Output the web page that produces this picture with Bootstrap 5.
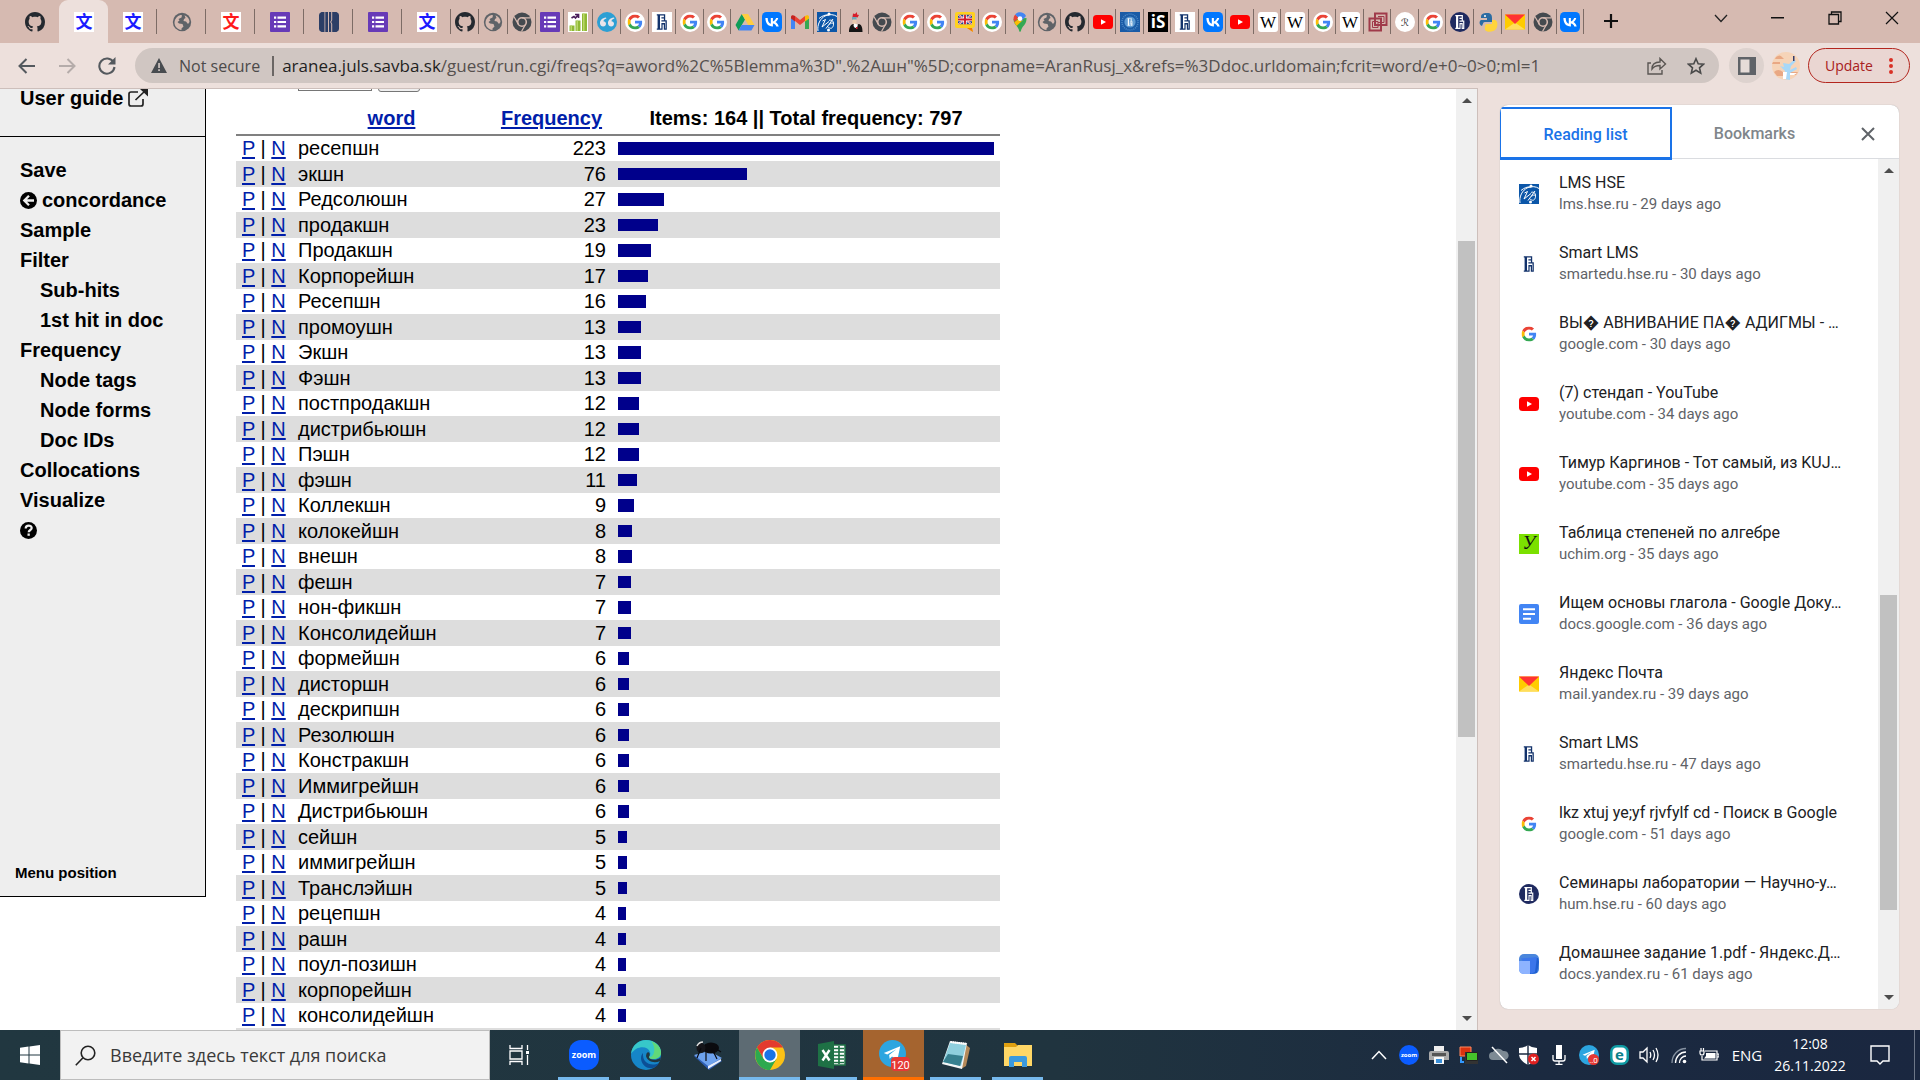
<!DOCTYPE html>
<html lang="en">
<head>
<meta charset="utf-8">
<meta name="viewport" content="width=device-width, initial-scale=1">
<title>Frequency list</title>
<link rel="stylesheet" href="https://cdn.jsdelivr.net/npm/bootstrap@5.3.0/dist/css/bootstrap.min.css">
<style>
:root { --frame:#d6bab1; --bar:#ede0dc; --pill:#d0c6c2; --ui:"Open Sans","Noto Sans",sans-serif; }
body { font-family:"Liberation Sans",Arial,sans-serif; color:#000; background:var(--bar); }
svg { display:block; flex:none; }
button { background:none; border:0; padding:0; color:inherit; }
.ico { width:20px; height:20px; }

/* tab strip */
.tabstrip { height:43px; background:var(--frame); }
.tab { display:flex; align-items:center; justify-content:center; flex:1 1 0; min-width:0; height:43px; position:relative; }
.tab.sep::after { content:""; position:absolute; right:0; top:9px; height:25px; width:1px; background:#7d6c66; }
.tab-first { width:10px; }
.tabs-wide { width:441px; }
.tabs-mid { width:170px; }
.tabs-slim { width:963px; }
.tab.current { background:var(--bar); border-radius:9px 9px 0 0; }
.win-btn { width:57px; height:36px; display:flex; align-items:center; justify-content:center; }
.new-tab { width:54px; height:34px; display:flex; align-items:center; justify-content:center; }

/* toolbar */
.toolbar { height:45px; padding:0 10px 0 7px; font-family:var(--ui); }
.nav-btn { width:40px; height:40px; display:flex; align-items:center; justify-content:center; }
.pill { background:var(--pill); border-radius:18px; height:35px; color:#4c4a4a; font-size:16px; padding:0 14px 0 16px; margin:0 10px 0 8px; }
.pill-share { margin-right:20px; }
.url-text { white-space:nowrap; overflow:hidden; color:#55504e; font-size:17px; }
.url-text b { font-weight:400; color:#1f1f1f; }
.round-btn { width:35px; height:35px; border-radius:50%; background:#ddd2ce; display:flex; align-items:center; justify-content:center; }
.update-btn { width:102px; height:35px; border:1px solid #b3261e; border-radius:18px; background:#ead6d2; color:#a82020; font-size:14px; }

/* page */
.viewport-area { border-top:1px solid #cdbfbb; border-right:1px solid #cdbfbb; background:#fff; }
.menu { width:206px; background:#eee; border-right:1px solid #000; border-bottom:1px solid #000; height:808px; font-weight:700; font-size:20px; line-height:30px; }
.menu a { color:#000; text-decoration:none; display:flex; align-items:center; gap:5px; padding-left:20px; height:30px; }
.menu a.sub { padding-left:40px; }
.menu-top { height:48px; border-bottom:1px solid #000; }
.menu-top a { height:18px; }
.menu-list { padding-top:18px; }
.menu a.menu-foot { font-size:15px; padding-left:15px; }
.results { padding-left:30px; }
.jump { margin-top:-23px; padding-left:62px; height:26px; gap:6px; }
.jump input { width:74px; height:25px; border:1px solid #767676; }
.jump button { width:42px; height:26px; border:1px solid #767676; border-radius:3px; background:#efefef; }
.freq-grid { width:764px; table-layout:fixed; border-collapse:separate; border-spacing:0; font-size:20px; line-height:24px; }
.freq-grid a { color:#001eaa; text-decoration:underline; text-decoration-thickness:2px; text-underline-offset:2px; }
.freq-grid th { height:44px; padding:14px 0 0; text-align:center; border-bottom:2px solid #808080; vertical-align:top; }
.freq-grid td { height:25px; padding:0 6px; vertical-align:middle; white-space:nowrap; }
.freq-grid tbody tr:nth-child(odd) td:not(:last-child) { padding-bottom:1px; }
.freq-grid tbody tr:nth-child(even) td { height:26px; background:#ddd; }
.freq-bar { height:13px; background:#00008b; }
tr:nth-child(even) .freq-bar { height:12px; }

/* scrollbars */
.sbar { width:21px; background:#f0f0f0; display:flex; flex-direction:column; align-items:center; padding:9px 0; }
.sbar i { width:17px; background:#c1c1c1; }
.sbar svg { width:10px; height:5px; fill:#4d4d4d; }
.thumb-page { margin-top:138px; height:496px; }
.thumb-list { margin-top:422px; height:315px; }

/* reading list */
.side { width:399px; margin:17px 21px 21px 22px; background:#fff; border-radius:8px; font-family:Roboto,sans-serif; box-shadow:0 0 1px #999; }
.side-head { height:54px; border-bottom:1px solid #dadce0; font-weight:500; font-size:16px; color:#80868b; }
.side-head button { padding-top:4px; }
.side-head .rl { width:172px; height:53px; align-self:flex-end; margin-bottom:-2px; color:#1a73e8; border:2px solid #1a73e8; border-bottom-width:3px; border-left-width:1px; font-weight:500; }
.side-head .bm { width:165px; font-weight:500; }
.read-item { height:70px; padding:0 20px 0 19px; color:#202124; text-decoration:none; gap:20px; }
.read-item .t { font-size:16px; line-height:20px; }
.read-item .s { font-size:15px; line-height:22px; color:#5f6368; }

/* taskbar */
.taskbar { height:50px; background:linear-gradient(90deg,#213740 0,#20343f 55%,#1b2a40 80%,#1a2740 100%); color:#fff; font-family:var(--ui); }
.start { width:60px; }
.finder { width:430px; background:#f2f2f2; border:1px solid #bdbdbd; padding-left:14px; gap:14px; }
.finder input { border:0; background:none; outline:0; font-size:18px; color:#333; padding:0; }
.finder input::placeholder { color:#3a3a3a; opacity:1; }
.app { width:62px; position:relative; display:flex; align-items:center; justify-content:center; }
.app.views { width:63px; padding-right:4px; }
.app.open::after { content:""; position:absolute; left:5px; right:6px; bottom:0; height:3px; background:#76b9ed; }
.app.front { background:linear-gradient(#5d6b73,#5d6b73) left/61px no-repeat; }
.app.alert-on { background:linear-gradient(#a5642f,#a5642f) left/61px no-repeat; }
.app.front::after, .app.alert-on::after { left:0; right:1px; }
.app.alert-on::after { background:#ff6f00; }
.tray-cell { width:30px; display:flex; align-items:center; justify-content:center; }
.lang { width:46px; font-size:15px; }
.clock { width:80px; font-size:14px; line-height:22px; text-align:center; }
.note { width:64px; padding-right:4px; }
.peek { width:6px; border-left:1px solid #6d7788; }
</style>
<script src="https://cdn.jsdelivr.net/npm/bootstrap@5.3.0/dist/js/bootstrap.bundle.min.js"></script>
</head>
<body class="vh-100 d-flex flex-column overflow-hidden">

<svg width="0" height="0" class="position-absolute" aria-hidden="true">
  <symbol id="github" viewBox="0 0 16 16"><path fill="#24292f" d="M8 0C3.58 0 0 3.58 0 8c0 3.54 2.29 6.53 5.47 7.59.4.07.55-.17.55-.38 0-.19-.01-.82-.01-1.49-2.01.37-2.53-.49-2.69-.94-.09-.23-.48-.94-.82-1.13-.28-.15-.68-.52-.01-.53.63-.01 1.08.58 1.23.82.72 1.21 1.87.87 2.33.66.07-.52.28-.87.51-1.07-1.78-.2-3.64-.89-3.64-3.95 0-.87.31-1.59.82-2.15-.08-.2-.36-1.02.08-2.12 0 0 .67-.21 2.2.82.64-.18 1.32-.27 2-.27.68 0 1.36.09 2 .27 1.53-1.04 2.2-.82 2.2-.82.44 1.1.16 1.92.08 2.12.51.56.82 1.27.82 2.15 0 3.07-1.87 3.75-3.65 3.95.29.25.54.73.54 1.48 0 1.07-.01 1.93-.01 2.2 0 .21.15.46.55.38A8.012 8.012 0 0 0 16 8c0-4.42-3.58-8-8-8z"/></symbol>
  <symbol id="globe" viewBox="0 0 20 20"><circle cx="10" cy="10" r="9.200" fill="#5f6368"/><path fill="#d6bab1" d="M2.500 10c.3-3 2.500-6 6-7l1.500.2-.5 2.300-3 1.500 1 1.500-2 1.500 1.500 1.500 3.500.5 1 2.500-2 2v1.500C5 17.500 2.300 14 2.500 10zM12.500 3.200c3.200 1.200 5 3.800 5 6.800l-1.500 2-2-2.500-2.500-.5.500-2 1.500-1z"/></symbol>
  <symbol id="forms" viewBox="0 0 20 20"><rect width="20" height="20" rx="1" fill="#673ab7"/><path fill="#fff" d="M4 4.500h2.200v2.200H4zM7.500 4.500H16v2.200H7.500zM4 8.900h2.200v2.200H4zM7.500 8.900H16v2.200H7.500zM4 13.300h2.200v2.200H4zM7.500 13.300H16v2.200H7.500z"/></symbol>
  <symbol id="kbars" viewBox="0 0 20 20"><path fill="#2c3e66" d="M2.500 0H5.500v20H2.500Q0 19 0 17V3Q0 1 2.500 0zM6.300 0H9v20H6.300zM10 0h2.200v8l-1 2 1 2v8H10zM13.200 0H17.500Q20 1 20 3v14q0 2-2.500 3H13.200V12l-1-2 1-2z"/></symbol>
  <symbol id="cgray" viewBox="0 0 20 20"><circle cx="10" cy="10" r="9.500" fill="#454a4f"/><circle cx="10" cy="10" r="4.300" fill="none" stroke="#d6bab1" stroke-width="1.600"/><path stroke="#d6bab1" stroke-width="1.200" d="M10 5.800h8.500M6.300 12.100 2 4.800M13.700 12.100 9.500 19.500"/></symbol>
  <symbol id="chart" viewBox="0 0 20 20"><rect width="20" height="20" fill="#fff"/><path fill="#8fb935" d="M1.500 13.500h5V19h-5zM7.500 8.500h5V19h-5zM14 1.500h5V19h-5z"/><path fill="#b9d76a" d="M2.500 13.500h1.500V19H2.500zM8.500 8.500H10V19H8.500zM15 1.500h1.500V19H15z"/><path fill="none" stroke="#4b1e5c" stroke-width="1.700" d="M3.500 6 6 4.500l1.500 1.500L10 3M7 2.500h3.500V6"/></symbol>
  <symbol id="quote" viewBox="0 0 20 20"><circle cx="10" cy="10" r="10" fill="#2c9fd4"/><path fill="#e8e4ea" d="M9 5.500C5 6 2.800 8.500 3 11.500c.2 2 1.500 3 3.200 3S9 13.300 9 11.800 7.800 9.200 6.400 9.200C6.800 8 7.700 7 9.400 6.600zM17 5.500c-4 .5-6.200 3-6 6 .2 2 1.500 3 3.200 3s2.800-1.200 2.800-2.700-1.200-2.600-2.600-2.600c.4-1.200 1.300-2.200 3-2.600z"/></symbol>
  <symbol id="g" viewBox="0 0 48 48"><path fill="#ea4335" d="M24 9.500c3.540 0 6.710 1.220 9.210 3.600l6.850-6.850C35.900 2.380 30.470 0 24 0 14.620 0 6.510 5.380 2.560 13.220l7.980 6.190C12.430 13.720 17.740 9.500 24 9.500z"/><path fill="#4285f4" d="M46.980 24.550c0-1.570-.15-3.090-.38-4.550H24v9.020h12.940c-.58 2.960-2.260 5.480-4.780 7.180l7.730 6c4.510-4.180 7.090-10.360 7.090-17.650z"/><path fill="#fbbc05" d="M10.530 28.590c-.48-1.450-.76-2.990-.76-4.590s.27-3.140.76-4.590l-7.980-6.190C.92 16.460 0 20.120 0 24c0 3.880.92 7.540 2.560 10.780l7.970-6.190z"/><path fill="#34a853" d="M24 48c6.480 0 11.930-2.130 15.890-5.810l-7.730-6c-2.150 1.450-4.920 2.300-8.160 2.300-6.260 0-11.570-4.220-13.470-9.910l-7.980 6.190C6.510 42.620 14.620 48 24 48z"/></symbol>
  <symbol id="gdisc" viewBox="0 0 20 20"><circle cx="10" cy="10" r="10" fill="#fff"/><use href="#g" x="2.500" y="2.500" width="15" height="15"/></symbol>
  <symbol id="gpad" viewBox="0 0 20 20"><use href="#g" x="2.500" y="2.500" width="15" height="15"/></symbol>
  <symbol id="hsemark" viewBox="0 0 20 20"><path fill="currentColor" d="M4.800 2.300H13.200V8.300H14.800V17.700H11.800V12.400H10.600V17.700H4.800V16.400H5.600V3.600H4.800zM8 3.600V16.400H9.400V11.100H13V16.400H13.500V9.600H9.400V8.300H11.900V6.600H9.400V5.300H11.900V3.600z" fill-rule="evenodd"/></symbol>
  <symbol id="hse" viewBox="0 0 20 20"><rect width="20" height="20" fill="#fff"/><use href="#hsemark" color="#12326b" width="20" height="20"/></symbol>
  <symbol id="hsedisc" viewBox="0 0 20 20"><circle cx="10" cy="10" r="10" fill="#1f2a60"/><use href="#hsemark" color="#fff" x="1" y="1" width="18" height="18"/></symbol>
  <symbol id="hseseal" viewBox="0 0 20 20"><rect width="20" height="20" fill="#1a5ba6"/><circle cx="10" cy="10" r="8" fill="none" stroke="#4d8ac8" stroke-width="1.500" stroke-dasharray="1 1"/><circle cx="10" cy="10" r="5.600" fill="#5d9ad2"/><use href="#hsemark" color="#fff" x="5" y="5" width="10" height="10"/></symbol>
  <symbol id="drive" viewBox="0 0 20 20"><path fill="#0f9d58" d="M6.800 2 0.500 13l3.100 5.400L10 7.500z"/><path fill="#ffcd40" d="M6.800 2h6.300l6.400 11h-6.200z"/><path fill="#4285f4" d="M6.600 13h12.900l-3.100 5.400H3.600z"/></symbol>
  <symbol id="vk" viewBox="0 0 20 20"><rect width="20" height="20" rx="4.500" fill="#07f"/><path fill="#fff" d="M10.700 14.400C6.100 14.400 3.500 11.300 3.400 6h2.300c.1 3.900 1.800 5.500 3.100 5.800V6h2.100v3.400c1.300-.1 2.700-1.700 3.200-3.400h2.100c-.3 2-1.800 3.500-2.800 4.100 1 .5 2.700 1.800 3.300 4.300h-2.400c-.5-1.500-1.700-2.700-3.400-2.900v2.900z"/></symbol>
  <symbol id="gmail" viewBox="0 0 20 20"><path fill="#4285f4" d="M1 17V6l4 3v8H2z"/><path fill="#34a853" d="M19 17V6l-4 3v8h3z"/><path fill="#ea4335" d="M5 4l5 4 5-4v5l-5 4-5-4z"/><path fill="#c5221f" d="M1 6.500V5c0-2 2-2.500 4-1v5.500z"/><path fill="#fbbc04" d="M19 6.500V5c0-2-2-2.500-4-1v5.500z"/></symbol>
  <symbol id="lms" viewBox="0 0 20 20"><rect width="20" height="20" fill="#0b56a8"/><path fill="none" stroke="#fff" d="M1 19C0 13 3 6 9 3.500c4-1.500 8-1 11 1M2 6.500C5 4 8 2.500 12 3M5.500 9l3-1.500L5 15l7-5.500M9 16.500 16 7M12.500 12.500c3-3 5-1 3.500 2s-3.500 1.500-5 .5M12 8.500c2-1 5 0 4.500 4"/><circle cx="12" cy="2" r="1.500" fill="#fff"/><circle cx="11.500" cy="18" r="1.500" fill="#fff"/></symbol>
  <symbol id="bird" viewBox="0 0 20 20"><path fill="#d61f2c" d="M8 1.500 10 2l2-2v2.500l2 .5-1.500 2.500L10 5 7.500 5z"/><path fill="#6fa8b8" d="M7 5h4.500v3H7z"/><path fill="#e9c9ae" d="M7.500 7.500h4V12h-4z"/><path fill="#151515" d="M4 20c0-4 1-7 4-8l3 1 3-1c3 1 3.500 4 3.500 8z"/><path fill="#fff" d="M9 11.500l4 1-1 3-2 .5-1.500-2z"/><path fill="#d61f2c" d="M11 15h1.500v2H11z"/></symbol>
  <symbol id="flag" viewBox="0 0 20 20"><path fill="#ffd21e" d="M2 0h16q2 0 2 2v11q0 3-3 3l1 4-6-4H2q-2 0-2-2V2q0-2 2-2z"/><svg x="3" y="2.500" width="14" height="10" viewBox="0 0 14 10"><path fill="#24408e" d="M0 0h14v10H0z"/><path stroke="#fff" stroke-width="1.800" d="m0 0 14 10M14 0 0 10"/><path stroke="#cf1b2b" stroke-width=".7" d="m0 0 14 10M14 0 0 10"/><path stroke="#fff" stroke-width="3.400" d="M7 0v10M0 5h14"/><path stroke="#cf1b2b" stroke-width="1.900" d="M7 0v10M0 5h14"/></svg><path fill="#f57c00" d="m12 16 6 4-1-4z"/></symbol>
  <symbol id="pin" viewBox="0 0 20 20"><path fill="#34a853" d="M10 20c-.8 0-.8-3-3-5.500C5 12 3.500 10.500 3.500 7L16.500 6c.2 4-1.500 6-3.500 8.500-2 2.500-2 5.500-3 5.500z"/><path fill="#fbbc04" d="M4.200 10.200 12.500 4l.5 4-6.500 6z"/><path fill="#ea4335" d="M3.500 7c0-2 .7-3.500 1.700-4.600L9 5.500 4.500 10z"/><path fill="#4285f4" d="M5.200 2.400C8 -.8 14 -.5 16 4l-4.500 5-3-3z"/><circle cx="10" cy="6.600" r="2.300" fill="#fff"/></symbol>
  <symbol id="yt" viewBox="0 0 20 20"><rect y="3" width="20" height="14" rx="3.500" fill="#f00"/><path fill="#fff" d="M8 7.200v5.600l5-2.800z"/></symbol>
  <symbol id="sq" viewBox="0 0 20 20"><path fill="none" stroke="#a03a4a" stroke-width="2" d="M7 1.500h11.500V13H7zM1.500 6.500H13v12H1.500z"/><path fill="none" stroke="#a03a4a" stroke-width="1" d="M10 4.500h6v6h-6M4.500 9.500H10v6H4.500z"/></symbol>
  <symbol id="snake" viewBox="0 0 20 20"><path fill="#2b6ca3" d="M3 5c0-3 2-4 6-4s5 2 5 5v4H7c-2 0-2 2-3 4C1 13 1 9 3 8h6V6H3z"/><path fill="#ffd43b" d="M8 12h6V8h3c3 1 3 6 1 9s-9 4-11 1c0-2-.5-4 1-6z"/><circle cx="7" cy="4" r="1" fill="#fff"/></symbol>
  <symbol id="ymail" viewBox="0 0 20 20"><path fill="#fc0" d="M0 2.500h20v15H0z"/><path fill="#ffde5c" d="m0 17.500 10-7 10 7z"/><path fill="#f33" d="M0 2.500h20L10 12z"/></symbol>
  <symbol id="gdoc" viewBox="0 0 20 20"><rect width="20" height="20" rx="2" fill="#4285f4"/><path fill="#fff" d="M4 4.200h12v2H4zM4 9h12v2H4zM4 13.800h8v2H4z"/></symbol>
  <symbol id="ydoc" viewBox="0 0 20 20"><rect width="20" height="20" rx="5" fill="#4a86dc"/><path fill="#1f5fd0" d="M11 4h8l1 4-2 11-7 1z"/><path fill="#3b76ea" d="M2 4.500 18 3l-2 15-4 2z"/><path fill="#8db3ff" d="M0 7h11v13H5q-5 0-5-5z"/></symbol>
  <symbol id="up" viewBox="0 0 10 5"><path d="M5 0l5 5H0z"/></symbol>
  <symbol id="down" viewBox="0 0 10 5"><path d="M0 0h10L5 5z"/></symbol>
  <symbol id="telegram" viewBox="0 0 28 28"><circle cx="14" cy="14" r="14" fill="#2ca5e0"/><path fill="#fff" d="M5 13.500 22 6.500l-3 14.500-5.500-4-2.500 2.500-.5-4L18 9.500 8.500 15z"/></symbol>
</svg>

<header>
  <nav class="tabstrip d-flex" aria-label="Browser tabs">
    <div class="tab-first"></div>
    <div class="tabs-wide d-flex" data-tabs="github wenblue* wenblue globe wenred forms kbars forms wenblue"></div>
    <div class="tabs-mid d-flex" data-tabs="github globe cgray forms chart quote"></div>
    <div class="tabs-slim d-flex" data-tabs="gdisc hse gdisc gdisc drive vk gmail lms bird cgray gdisc gdisc flag gdisc pin globe github yt hseseal isq hse vk yt wiki wiki gdisc wiki sq rr gdisc hsedisc snake ymail cgray vk"></div>
    <button class="new-tab mt-1" aria-label="New tab"><svg width="16" height="16" viewBox="0 0 16 16"><path stroke="#111" stroke-width="2.200" d="M8 1v14M1 8h14"/></svg></button>
    <div class="ms-auto d-flex">
      <button class="win-btn" aria-label="Search tabs"><svg width="14" height="9" viewBox="0 0 14 9"><path fill="none" stroke="#222" stroke-width="1.300" d="m1 1 6 6.500L13 1"/></svg></button>
      <button class="win-btn" aria-label="Minimize"><svg width="13" height="2"><path fill="#111" d="M0 0h13v1.500H0z"/></svg></button>
      <button class="win-btn" aria-label="Restore"><svg width="14" height="14" viewBox="0 0 14 14"><path fill="none" stroke="#111" stroke-width="1.300" d="M1 3.500h9.500V13H1zM3.500 3.500V1H13v9.500h-2.500"/></svg></button>
      <button class="win-btn" aria-label="Close"><svg width="14" height="14" viewBox="0 0 14 14"><path stroke="#111" stroke-width="1.200" d="m1 1 12 12M13 1 1 13"/></svg></button>
    </div>
  </nav>
  <div class="toolbar d-flex align-items-center">
    <div class="d-flex">
      <button class="nav-btn" aria-label="Back"><svg width="18" height="16" viewBox="0 0 18 16"><path fill="none" stroke="#54595e" stroke-width="2" d="M17 8H2M8.500 1 1.500 8l7 7"/></svg></button>
      <button class="nav-btn" aria-label="Forward"><svg width="18" height="16" viewBox="0 0 18 16"><path fill="none" stroke="#b5acaa" stroke-width="2" d="M1 8h15M9.500 1l7 7-7 7"/></svg></button>
      <button class="nav-btn" aria-label="Reload"><svg width="18" height="18" viewBox="0 0 18 18"><path fill="none" stroke="#54595e" stroke-width="2.100" d="M15.500 5.200A7.600 7.600 0 1 0 16.500 10"/><path fill="#54595e" d="M17.500 0v7.500H10z"/></svg></button>
    </div>
    <div class="pill d-flex align-items-center flex-grow-1 overflow-hidden">
      <svg width="16" height="15" viewBox="0 0 16 15"><path fill="#484c50" d="M8 0l8 15H0z"/><path fill="#d0c6c2" d="M7.200 5h1.700v5H7.200zM7.200 11.300h1.700V13H7.200z"/></svg>
      <span class="ps-2 ms-1 pe-2 me-1 text-nowrap">Not secure</span>
      <svg width="2" height="20" class="me-2"><path fill="#6b6664" d="M0 0h2v20H0z"/></svg>
      <div class="url-text flex-grow-1"><b>aranea.juls.savba.sk</b>/guest/run.cgi/freqs?q=aword%2C%5Blemma%3D".%2Aшн"%5D;corpname=AranRusj_x&amp;refs=%3Ddoc.urldomain;fcrit=word/e+0~0&gt;0;ml=1</div>
      <button class="pill-share" aria-label="Share"><svg width="20" height="18" viewBox="0 0 20 18"><path fill="none" stroke="#5a5653" stroke-width="1.400" d="M4 6H1v11h14v-4M5 12c0-5 3-7 8-7V1.500L18.500 7 13 12V8.500c-4 0-6 .5-8 3.500z"/></svg></button>
      <button aria-label="Bookmark this page"><svg width="18" height="18" viewBox="0 0 18 18"><path fill="none" stroke="#4a4a4a" stroke-width="1.600" d="m9 1.700 2.200 5 5.300.5-4 3.600 1.200 5.300L9 13.300l-4.700 2.800 1.200-5.300-4-3.600 5.300-.5z"/></svg></button>
    </div>
    <div class="d-flex align-items-center gap-2">
      <button class="round-btn" aria-label="Side panel"><svg width="18" height="18" viewBox="0 0 18 18"><path fill="#5f6368" d="M0 0h18v18H0z"/><path fill="#e6dcd8" d="M2.500 2.500h9v13h-9z"/></svg></button>
      <button aria-label="Profile"><svg width="28" height="28" viewBox="0 0 28 28"><circle cx="14" cy="14" r="14" fill="#f6d4b8"/><path fill="#e9a884" d="M4 5q4-3 6 0l2 2H3zM1 10h7v2H0zM2 20q4-4 9 0l1 4H5zM18 20h8l-2 3h-6z"/><path fill="#a8d8f8" d="M11 11l6 1 5-4 2 1-5 5-1 4 6-3 1 2-7 4v7l-6-1 1-8-5-5 4 1z"/><path fill="#fff" d="M11 20h4l-1 7h-3zM18 21h7l-3 2h-4z"/><path fill="#333c6a" d="M21 4h1.500v5H21z"/></svg></button>
      <button class="update-btn d-flex align-items-center justify-content-between ps-3 pe-3"><span>Update</span><svg width="4" height="16" viewBox="0 0 4 16"><path fill="none" stroke="#d93025" stroke-width="4" stroke-linecap="round" d="M2 2h0M2 8h0M2 14h0"/></svg></button>
    </div>
  </div>
</header>

<main class="d-flex flex-grow-1 overflow-hidden">
  <div class="viewport-area d-flex flex-grow-1 overflow-hidden">
    <nav class="menu flex-shrink-0 d-flex flex-column" aria-label="Corpus menu">
      <div class="menu-top"><a href="#">User guide <svg width="20" height="18" viewBox="0 0 20 18"><path fill="none" stroke="#222" stroke-width="1.700" d="M10 3H3Q1 3 1 5v10q0 2 2 2h10q2 0 2-2v-5M7.500 11 17 2"/><path fill="#222" d="M12 0h8v7.500z"/></svg></a></div>
      <div class="menu-list">
        <a href="#">Save</a>
        <a href="#"><svg width="17" height="17" viewBox="0 0 17 17"><circle cx="8.500" cy="8.500" r="8.500"/><path fill="none" stroke="#eee" stroke-width="2.300" d="M14 8.500H5M9 3.800 4.300 8.500 9 13.200"/></svg>concordance</a>
        <a href="#">Sample</a>
        <a href="#">Filter</a>
        <a href="#" class="sub">Sub-hits</a>
        <a href="#" class="sub">1st hit in doc</a>
        <a href="#">Frequency</a>
        <a href="#" class="sub">Node tags</a>
        <a href="#" class="sub">Node forms</a>
        <a href="#" class="sub">Doc IDs</a>
        <a href="#">Collocations</a>
        <a href="#">Visualize</a>
        <a href="#" aria-label="Help"><svg width="17" height="17" viewBox="0 0 17 17"><circle cx="8.500" cy="8.500" r="8.500"/><path fill="none" stroke="#eee" stroke-width="2.200" d="M5.700 6.500c0-4 6-3.500 6-.5 0 2-3 2-3 4.300"/><path fill="#eee" d="M7.500 11.500h2.300v2.300H7.500z"/></svg></a>
      </div>
      <a href="#" class="menu-foot mt-auto mb-2">Menu position</a>
    </nav>
    <section class="results flex-grow-1 overflow-hidden">
      <form class="jump d-flex align-items-start"><input type="text" aria-label="Page"><button type="button" aria-label="Go"></button></form>
      <table class="freq-grid">
        <colgroup><col width="56"><col width="199"><col width="121"><col width="388"></colgroup>
        <thead><tr><th></th><th><a href="#">word</a></th><th><a href="#">Frequency</a></th><th>Items: 164 || Total frequency: 797</th></tr></thead>
        <tbody id="rows"></tbody>
      </table>
    </section>
    <div class="sbar flex-shrink-0"><svg><use href="#up"/></svg><i class="thumb-page"></i><svg class="mt-auto"><use href="#down"/></svg></div>
  </div>

  <aside class="side d-flex flex-column overflow-hidden flex-shrink-0">
    <div class="side-head d-flex flex-shrink-0">
      <button class="rl">Reading list</button>
      <button class="bm">Bookmarks</button>
      <button class="flex-grow-1 d-flex align-items-center justify-content-center" aria-label="Close panel"><svg width="14" height="14" viewBox="0 0 14 14"><path stroke="#5f6368" stroke-width="2" d="m1 1 12 12M13 1 1 13"/></svg></button>
    </div>
    <div class="d-flex flex-grow-1 overflow-hidden">
      <div id="reads" class="flex-grow-1 overflow-hidden"></div>
      <div class="sbar flex-shrink-0"><svg><use href="#up"/></svg><i class="thumb-list"></i><svg class="mt-auto"><use href="#down"/></svg></div>
    </div>
  </aside>
</main>

<footer class="taskbar d-flex flex-shrink-0">
  <button class="start d-flex align-items-center justify-content-center" aria-label="Start"><svg width="20" height="20" viewBox="0 0 20 20"><path fill="#fff" d="M0 2.800 8.500 1.600v7.900H0zM9.500 1.400 20 0v9.500H9.500zM0 10.500h8.500v7.900L0 17.200zM9.500 10.500H20V20L9.500 18.600z"/></svg></button>
  <label class="finder d-flex align-items-center"><svg width="21" height="21" viewBox="0 0 21 21"><circle cx="13" cy="8" r="6.800" fill="none" stroke="#222" stroke-width="1.600"/><path stroke="#222" stroke-width="1.600" d="M8 12.800.8 20.200"/></svg><input class="flex-grow-1" type="text" placeholder="Введите здесь текст для поиска" aria-label="Поиск"></label>
  <button class="app views" aria-label="Task view"><svg width="21" height="20" viewBox="0 0 21 20"><path fill="none" stroke="#fff" stroke-width="1.300" d="M1 0v3.500h12V0M1 20v-3.500h12V20M1 6h12v8H1zM18.500 0v5M18.500 10v10"/><path fill="#fff" d="M17 6h3v3h-3z"/></svg></button>
  <button class="app open" aria-label="Zoom"><svg width="30" height="30" viewBox="0 0 30 30"><rect width="30" height="30" rx="12" fill="#0b5cff"/><text x="15" y="17.500" text-anchor="middle" font-size="9" font-weight="700" font-family="Open Sans" fill="#fff">zoom</text></svg></button>
  <button class="app open" aria-label="Edge"><svg width="30" height="30" viewBox="0 0 30 30"><circle cx="15" cy="15" r="15" fill="#1686c8"/><path fill="#37c7c9" d="M0 14C1 5 8 0 15 0c9 0 15 6 15 12 0 5-4 7-8 7-3 0-4-1-4-2s2-2 1-5C17 6 6 5 0 14z"/><path fill="#61d978" d="M20 1c7 3 10 7 10 12 0 4-4 6-8 6-3 0-4-1-4-2 5 1 8-9 2-16z"/><path fill="#0c4f96" d="M12 13c-5 5 0 17 10 15 3-1 5-3 6-5-8 4-17 0-16-10z"/><path fill="#213740" d="M18 17c0 3 7 4 11 1l1-1-1 4c-6 3-13 0-14-5q0-3 2-4 3 1 1 5z"/></svg></button>
  <button class="app" aria-label="Dictionary"><svg width="30" height="30" viewBox="0 0 30 30"><path fill="#2f5fb5" d="m1 16 17-4 11 9-13 9z"/><path fill="#6ea2ee" d="m1 15 15-4 13 7-14 8z"/><path fill="#e8eefc" d="m15 26 13-7v2l-13 8z"/><ellipse cx="18" cy="8" rx="8" ry="5.500" fill="#0b0b0f"/><ellipse cx="8" cy="8" rx="4.500" ry="5" fill="#15151a"/><path stroke="#0b0b0f" stroke-width="1.200" d="m8 8-4 10M13 9v12M19 9l5 10M22 8l6 4"/><path fill="none" stroke="#ddd" stroke-width="1.500" d="M4 6q2-4 6-4"/></svg></button>
  <button class="app open front" aria-label="Chrome"><svg width="30" height="30" viewBox="0 0 30 30"><circle cx="15" cy="15" r="15" fill="#fbc116"/><path fill="#e33b2e" d="M2 7.500C7-2 22-3 28 7.500H15L8.500 18.500z"/><path fill="#2da94f" d="M2 7.500 8.500 18.700 15 22.500l6.500-3.700L15 30C3 30-3 17 2 7.500z"/><circle cx="15" cy="15" r="7.400" fill="#fff"/><circle cx="15" cy="15" r="5.700" fill="#1a73e8"/></svg></button>
  <button class="app open" aria-label="Excel"><svg width="28" height="28" viewBox="0 0 28 28"><path fill="#fff" stroke="#1e7145" stroke-width="1.500" d="M14 4h13v20H14z"/><path stroke="#1e7145" stroke-width="1.700" d="M16 7.500h10M16 11h10M16 14.500h10M16 18h10M16 21.500h10M21 5v18"/><path fill="#1e7145" d="M0 3 16 0v28L0 25z"/><path stroke="#fff" stroke-width="2.400" d="m4.500 9 7 10.500M11.500 9l-7 10.500"/></svg></button>
  <button class="app open alert-on" aria-label="Telegram"><svg width="32" height="32" viewBox="0 0 32 32"><use href="#telegram" x="1" y="1" width="27" height="27"/><rect x="13" y="18" width="19" height="14" rx="4" fill="#e53935"/><text x="22.500" y="29.500" text-anchor="middle" font-size="11" font-family="Roboto" fill="#fff">120</text></svg></button>
  <button class="app open" aria-label="Notepad"><svg width="28" height="30" viewBox="0 0 28 30"><path fill="#b58a5a" d="m23 4 5 4-4 18-5 3z"/><path fill="#f3f6f6" d="m8 1 17 2-5 26L0 24z"/><path fill="#8fd0de" d="m8 3 16 2-5 21L1 22z"/><path fill="#37808f" d="m6 14 15 2-3 10L1 22z"/><path stroke="#fff" stroke-width="2" stroke-dasharray="1 1" d="m9 2 16 2"/></svg></button>
  <button class="app open" aria-label="File Explorer"><svg width="28" height="24" viewBox="0 0 28 24"><path fill="#e0a010" d="M0 0h11l3 3v3H0z"/><path fill="#ffd766" d="M0 4h12l2-2h14v21H0z"/><path fill="#3b9ade" d="M5 24v-9q0-2 2-2h14q2 0 2 2v9h-5v-5h-8v5z"/></svg></button>

  <div class="ms-auto d-flex align-items-stretch">
    <button class="tray-cell" aria-label="Hidden icons"><svg width="16" height="10" viewBox="0 0 16 10"><path fill="none" stroke="#fff" stroke-width="1.500" d="m1 9 7-7.500L15 9"/></svg></button>
    <div class="tray-cell"><svg width="20" height="20" viewBox="0 0 20 20"><circle cx="10" cy="10" r="10" fill="#0b5cff"/><text x="10" y="12" text-anchor="middle" font-size="6" font-weight="700" font-family="Open Sans" fill="#fff">zoom</text></svg></div>
    <div class="tray-cell"><svg width="20" height="20" viewBox="0 0 20 20"><path fill="#eee" d="M5 1h10v6H5z"/><path fill="#aaa" d="M0 8q0-2 2-2h16q2 0 2 2v7H0z"/><path fill="#555" d="M3 8h14v3H3z"/><path fill="#f6f6f6" d="M5 12h10v7H5z"/><path fill="#3a8fd8" d="M7 14h6v4H7z"/></svg></div>
    <div class="tray-cell"><svg width="20" height="20" viewBox="0 0 20 20"><path fill="#d9330f" stroke="#ff8a60" d="M1 2h11v9H1z"/><path fill="#333" d="M6 7h13v12H6z"/><path fill="#45c22b" stroke="#222" d="M7.500 7.500h11v8h-11z"/><path fill="none" stroke="#39f" stroke-width="2" d="M2 12v5h3"/></svg></div>
    <div class="tray-cell"><svg width="20" height="20" viewBox="0 0 20 20"><path fill="#7d8a94" d="M4 15a4 4 0 0 1 0-8 6 6 0 0 1 10-1 4.500 4.500 0 0 1 2 9z"/><path stroke="#fff" stroke-width="1.500" d="m3 2 15 16"/></svg></div>
    <div class="tray-cell"><svg width="20" height="20" viewBox="0 0 20 20"><path fill="#fff" d="M9 0q4 3 9 3v7q-1 6-9 10Q1 16 0 10V3q5 0 9-3z"/><path stroke="#1b2a40" stroke-width="1.400" d="M9 0v20M0 9h18"/><circle cx="14.500" cy="14" r="5.500" fill="#e02020"/><path stroke="#fff" stroke-width="1.500" d="m12.500 12 4 4m0-4-4 4"/></svg></div>
    <div class="tray-cell"><svg width="14" height="20" viewBox="0 0 14 20"><path fill="#fff" d="M4 0h6v14H4z"/><path fill="none" stroke="#fff" stroke-width="1.300" d="M1 10v4q0 2 2 2h8q2 0 2-2v-4M7 16v3M3.500 19.300h7"/></svg></div>
    <div class="tray-cell"><svg width="20" height="20" viewBox="0 0 20 20"><use href="#telegram" width="20" height="20"/><circle cx="14.500" cy="14.500" r="5.500" fill="#e53935"/><text x="14.500" y="18" text-anchor="middle" font-size="8" font-family="Roboto" fill="#fff">..0</text></svg></div>
    <div class="tray-cell"><svg width="19" height="20" viewBox="0 0 19 20"><rect width="19" height="20" rx="7" fill="#0f9aa3"/><rect x="2.500" y="2.500" width="14" height="15" rx="4.500" fill="#fff"/><text x="9.500" y="15" text-anchor="middle" font-size="15" font-weight="700" font-family="Open Sans" fill="#0b7f88">e</text></svg></div>
    <div class="tray-cell"><svg width="20" height="18" viewBox="0 0 20 18"><path fill="none" stroke="#fff" stroke-width="1.300" d="M1 6h3l4-4v14l-4-4H1zM11 6q1.500 3 0 6M14 4q3 5 0 10M17 2q4 7 0 14"/></svg></div>
    <div class="tray-cell"><svg width="16" height="17" viewBox="0 0 16 17"><path fill="none" stroke="#8591a0" stroke-width="1.300" d="M1 16C1 8 7 1.500 15 1.500"/><path fill="none" stroke="#fff" stroke-width="1.300" d="M4.500 16C4.500 10 9 5 15 5M8.500 16c0-4 3-7 6.500-7"/><circle cx="13.500" cy="14.500" r="1.800" fill="#fff"/></svg></div>
    <div class="tray-cell"><svg width="20" height="14" viewBox="0 0 20 14"><path fill="none" stroke="#fff" stroke-width="1.200" d="M6 3h12v9H3V8M18.500 6H20v3h-1.500M1 3v2q0 2 2 2t2-2V3zM2 0v3M4.500 0v3"/><path fill="#fff" d="M7 5h9.500v5.500H5L7 8z"/></svg></div>
    <div class="lang d-flex align-items-center justify-content-center">ENG</div>
    <time class="clock d-flex flex-column justify-content-center"><span>12:08</span><span>26.11.2022</span></time>
    <button class="note d-flex align-items-center justify-content-center" aria-label="Notifications"><svg width="20" height="20" viewBox="0 0 20 20"><path fill="none" stroke="#fff" stroke-width="1.400" d="M1 1h18v15h-6l-3 3-3-3H1z"/></svg></button>
    <div class="peek"></div>
  </div>
</footer>

<script>
// Icons that hold a letter are written in place, all others come from the sprite above.
function letter(shape, ch, y, size, font, fill, extra) {
  return shape + '<text x="10" y="' + y + '" text-anchor="middle" font-size="' + size + '" font-family="' + font +
    '" fill="' + fill + '" ' + (extra || '') + '>' + ch + '</text>';
}
var box = '<rect width="20" height="20" fill="#fff"/>';
var letterIcons = {
  wenblue: letter(box, '文', 16, 17, 'Noto Sans CJK SC', '#1a1aff', 'font-weight="700"'),
  wenred: letter(box, '文', 16, 17, 'Noto Sans CJK SC', '#ff1a1a', 'font-weight="700"'),
  isq: letter('<rect width="20" height="20"/>', 'iS', 16, 17, 'Open Sans', '#fff', 'font-weight="700"'),
  wiki: letter('<rect width="20" height="20" rx="3" fill="#fff"/>', 'W', 16, 17, 'Liberation Serif', '#000'),
  rr: letter('<circle cx="10" cy="10" r="10" fill="#fff"/>', 'ℛ', 14, 10, 'DejaVu Sans', '#333'),
  uchim: letter('<rect width="20" height="20" fill="#7be000"/>', 'У', 15, 19, 'Liberation Serif', '#111', 'font-style="italic"')
};
function icon(name) {
  return letterIcons[name]
    ? '<svg class="ico" viewBox="0 0 20 20">' + letterIcons[name] + '</svg>'
    : '<svg class="ico"><use href="#' + name + '"/></svg>';
}

// Browser tabs: an asterisk marks the current one, the tabs beside it carry no divider.
document.querySelectorAll('[data-tabs]').forEach(function (group) {
  var names = group.dataset.tabs.split(' ');
  group.innerHTML = names.map(function (name, i) {
    var current = name.endsWith('*');
    var beside = current || (names[i + 1] || '').endsWith('*');
    var cls = 'tab' + (current ? ' current' : '') + (beside ? '' : ' sep');
    return '<div class="' + cls + '">' + icon(name.replace('*', '')) + '</div>';
  }).join('');
});

// Frequency table: bar length follows the count, the top row spans the whole column.
var words = [['ресепшн',223],['экшн',76],['Редсолюшн',27],['продакшн',23],['Продакшн',19],['Корпорейшн',17],['Ресепшн',16],
  ['промоушн',13],['Экшн',13],['Фэшн',13],['постпродакшн',12],['дистрибьюшн',12],['Пэшн',12],['фэшн',11],['Коллекшн',9],
  ['колокейшн',8],['внешн',8],['фешн',7],['нон-фикшн',7],['Консолидейшн',7],['формейшн',6],['дисторшн',6],['дескрипшн',6],
  ['Резолюшн',6],['Констракшн',6],['Иммигрейшн',6],['Дистрибьюшн',6],['сейшн',5],['иммигрейшн',5],['Транслэйшн',5],
  ['рецепшн',4],['рашн',4],['поул-позишн',4],['корпорейшн',4],['консолидейшн',4],['',0]];
document.getElementById('rows').innerHTML = words.map(function (w) {
  if (!w[1]) return '<tr><td></td><td></td><td></td><td></td></tr>';
  return '<tr><td><a href="#">P</a> | <a href="#">N</a></td><td>' + w[0] + '</td><td class="text-end">' + w[1] +
    '</td><td><div class="freq-bar" style="width:' + Math.round(w[1] * 1.68 + 1) + 'px"></div></td></tr>';
}).join('');

var reads = [['lms','LMS HSE','lms.hse.ru - 29 days ago'],['hse','Smart LMS','smartedu.hse.ru - 30 days ago'],
  ['gpad','ВЫ\uFFFD АВНИВАНИЕ ПА\uFFFD АДИГМЫ - …','google.com - 30 days ago'],
  ['yt','(7) стендап - YouTube','youtube.com - 34 days ago'],
  ['yt','Тимур Каргинов - Тот самый, из KUJ…','youtube.com - 35 days ago'],
  ['uchim','Таблица степеней по алгебре','uchim.org - 35 days ago'],
  ['gdoc','Ищем основы глагола - Google Доку…','docs.google.com - 36 days ago'],
  ['ymail','Яндекс Почта','mail.yandex.ru - 39 days ago'],['hse','Smart LMS','smartedu.hse.ru - 47 days ago'],
  ['gpad','lkz xtuj ye;yf rjvfylf cd - Поиск в Google','google.com - 51 days ago'],
  ['hsedisc','Семинары лаборатории — Научно-у…','hum.hse.ru - 60 days ago'],
  ['ydoc','Домашнее задание 1.pdf - Яндекс.Д…','docs.yandex.ru - 61 days ago']];
document.getElementById('reads').innerHTML = reads.map(function (r) {
  return '<a href="#" class="read-item d-flex align-items-center">' + icon(r[0]) +
    '<span class="overflow-hidden"><span class="t d-block text-truncate">' + r[1] +
    '</span><span class="s d-block text-truncate">' + r[2] + '</span></span></a>';
}).join('');
</script>
</body>
</html>
